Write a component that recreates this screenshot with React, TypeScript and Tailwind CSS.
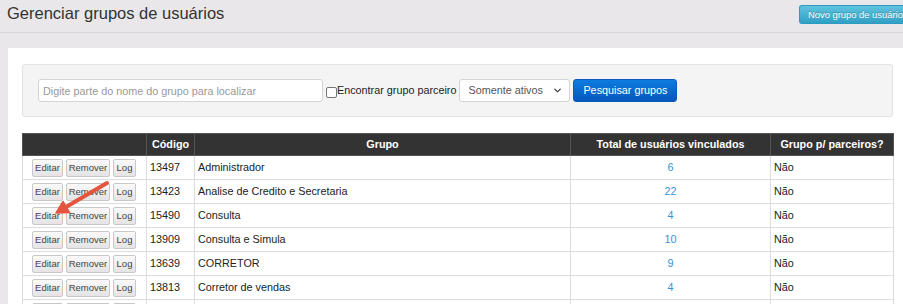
import { ChevronDown } from "lucide-react"

const rows = [
  { code: "13497", name: "Administrador", total: 6 },
  { code: "13423", name: "Analise de Credito e Secretaria", total: 22 },
  { code: "15490", name: "Consulta", total: 4 },
  { code: "13909", name: "Consulta e Simula", total: 10 },
  { code: "13639", name: "CORRETOR", total: 9 },
  { code: "13813", name: "Corretor de vendas", total: 4 },
  { code: "13702", name: "Diretoria", total: 3 },
]

function SmallButton({ label, width }: { label: string; width: string }) {
  return (
    <button
      className={`${width} h-[18px] rounded-[2px] border border-[#c8c8c8] bg-gradient-to-b from-[#fafafa] to-[#e4e4e4] text-[9.5px] leading-none text-[#444]`}
    >
      {label}
    </button>
  )
}

export default function App() {
  return (
    <div className="relative w-[903px] h-[304px] overflow-hidden bg-[#e9e7e9] font-['Liberation_Sans',Arial,sans-serif] text-[#222]">
      {/* Page header */}
      <div className="flex items-start justify-between h-[33px] border-b border-[#d6d4d6] pl-[7px]">
        <h1 className="pt-[3px] text-[16.5px] leading-[20px] text-[#333]">Gerenciar grupos de usuários</h1>
        <button className="mt-[5px] h-[19px] w-[104px] shrink-0 whitespace-nowrap rounded-l-[3px] bg-gradient-to-b from-[#5fc3df] to-[#2fa0c4] border border-r-0 border-[#2d9ac0] text-left pl-[8px] text-[9.4px] leading-none text-white [text-shadow:0_-1px_0_rgba(0,0,0,0.25)]">
          Novo grupo de usuário
        </button>
      </div>

      <div className="mt-[15px] ml-[8px] bg-white pt-[16px] pl-[14px] pr-[10px] h-[300px]">
        {/* Search panel */}
        <div className="flex items-center h-[53px] rounded-[3px] border border-[#e2e2e2] bg-[#f4f4f4] pl-[15px] text-[10.8px]">
          <input
            className="w-[285px] h-[23px] rounded-[3px] border border-[#d4d4d4] bg-white px-[4px] text-[10.8px] text-[#555] placeholder:text-[#999] outline-none"
            placeholder="Digite parte do nome do grupo para localizar"
          />
          <span className="ml-[3px] mt-[4px] w-[11px] h-[11px] border border-[#767676] rounded-[2px] bg-white" />
          <span className="leading-none text-[#222]">Encontrar grupo parceiro</span>
          <div className="ml-[3px] flex items-center justify-between w-[111px] h-[23px] rounded-[3px] border border-[#d4d4d4] bg-white pl-[8px] pr-[6px] text-[#555]">
            <span>Somente ativos</span>
            <ChevronDown size={11} strokeWidth={3} className="text-[#444]" />
          </div>
          <button className="ml-[3px] h-[23px] w-[104px] rounded-[3px] border border-[#0a5bbd] bg-gradient-to-b from-[#0e7ce0] to-[#0557bb] text-white">
            Pesquisar grupos
          </button>
        </div>

        {/* Table */}
        <table className="mt-[16px] w-[871px] border-collapse text-[10.8px] table-fixed">
          <thead>
            <tr className="h-[22px] bg-[#333] text-white font-bold">
              <th className="w-[124px] border border-[#555]"></th>
              <th className="w-[48px] border border-[#555] text-center">Código</th>
              <th className="w-[376px] border border-[#555] text-center">Grupo</th>
              <th className="w-[200px] border border-[#555] text-center">Total de usuários vinculados</th>
              <th className="w-[123px] border border-[#555] text-center">Grupo p/ parceiros?</th>
            </tr>
          </thead>
          <tbody>
            {rows.map((row) => (
              <tr key={row.code} className="h-[24px]">
                <td className="border border-[#dcdcdc] pl-[9px]">
                  <div className="flex gap-[3px]">
                    <SmallButton label="Editar" width="w-[31px]" />
                    <SmallButton label="Remover" width="w-[44px]" />
                    <SmallButton label="Log" width="w-[23px]" />
                  </div>
                </td>
                <td className="border border-[#dcdcdc] pl-[3px]">{row.code}</td>
                <td className="border border-[#dcdcdc] pl-[3px]">{row.name}</td>
                <td className="border border-[#dcdcdc] text-center text-[#3a8fd3]">{row.total}</td>
                <td className="border border-[#dcdcdc] pl-[3px]">Não</td>
              </tr>
            ))}
          </tbody>
        </table>
      </div>

      {/* Annotation arrow */}
      <svg className="absolute left-0 top-0 pointer-events-none" width="903" height="304">
        <line x1="107" y1="183" x2="66" y2="207" stroke="#e4553f" strokeWidth="4" strokeLinecap="round" />
        <polygon points="56,213 69.5,212.5 63,201.5" fill="#e4553f" stroke="#e4553f" strokeWidth="1.5" strokeLinejoin="round" />
      </svg>
    </div>
  )
}
